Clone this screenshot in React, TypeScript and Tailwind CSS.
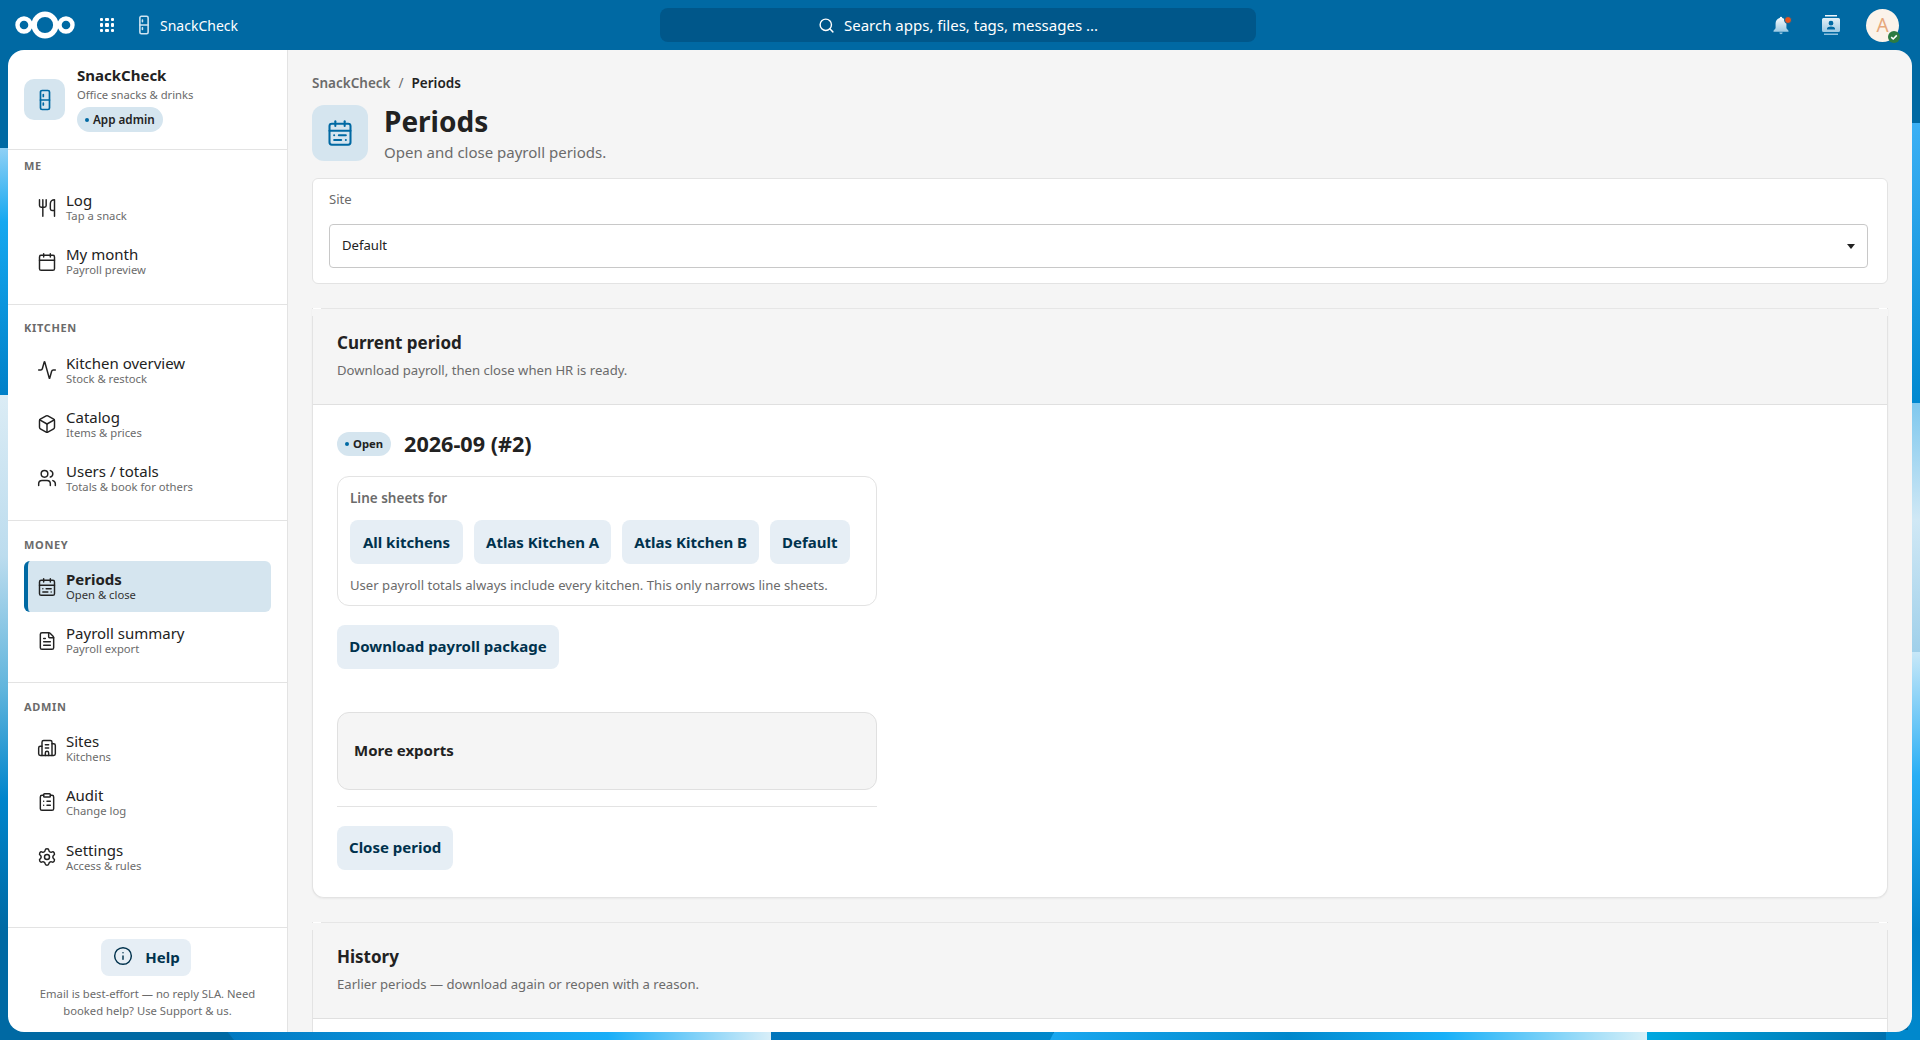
import React from "react";
import {
  Utensils, Calendar, Activity, Box, Users, CalendarRange, FileText, Building2, ClipboardList, Settings, Info, Search,
} from "lucide-react";

function Fridge({ className }: { className?: string }) {
  return (
    <svg viewBox="0 0 24 24" fill="none" stroke="currentColor" strokeWidth="1.7" strokeLinecap="round" className={className}>
      <rect x="7.5" y="2.5" width="9" height="19" rx="1.6" />
      <path d="M7.5 12h9M10.3 6.5v2M10.3 15v2" />
    </svg>
  );
}

function Wallpaper() {
  return (
    <svg viewBox="0 0 1920 1040" preserveAspectRatio="none" className="absolute inset-0 h-full w-full">
      <defs>
        <linearGradient id="l1" x1="0" y1="0" x2="0" y2="1">
          <stop offset="0" stopColor="#8fd0f5" />
          <stop offset="0.3" stopColor="#15a8f0" />
          <stop offset="1" stopColor="#0080c8" />
        </linearGradient>
        <linearGradient id="l2" x1="0" y1="0" x2="0" y2="1">
          <stop offset="0" stopColor="#dbecf5" />
          <stop offset="0.3" stopColor="#bcdcee" />
          <stop offset="0.55" stopColor="#5fb4dc" />
          <stop offset="0.75" stopColor="#0085cc" />
          <stop offset="1" stopColor="#0069a3" />
        </linearGradient>
        <linearGradient id="r1" x1="0" y1="0" x2="0" y2="1">
          <stop offset="0" stopColor="#3cb0f5" />
          <stop offset="1" stopColor="#0088d0" />
        </linearGradient>
        <linearGradient id="r2" x1="0" y1="0" x2="0" y2="1">
          <stop offset="0" stopColor="#7fc8ee" />
          <stop offset="0.47" stopColor="#d0e8f5" />
          <stop offset="1" stopColor="#a0d0ea" />
        </linearGradient>
        <linearGradient id="r3" x1="0" y1="0" x2="0" y2="1">
          <stop offset="0" stopColor="#c8e8f8" />
          <stop offset="0.32" stopColor="#28aef5" />
          <stop offset="0.72" stopColor="#0080c8" />
          <stop offset="1" stopColor="#0088cc" />
        </linearGradient>
        <linearGradient id="b1" x1="0" y1="0" x2="1" y2="0">
          <stop offset="0" stopColor="#0078c0" />
          <stop offset="0.7" stopColor="#18aef8" />
          <stop offset="1" stopColor="#d8eef8" />
        </linearGradient>
        <linearGradient id="b2" x1="0" y1="0" x2="1" y2="0">
          <stop offset="0" stopColor="#1aa8f0" />
          <stop offset="0.4" stopColor="#0088cc" />
          <stop offset="0.66" stopColor="#18b0f8" />
          <stop offset="1" stopColor="#d8f0f8" />
        </linearGradient>
        <linearGradient id="b3" x1="0" y1="0" x2="1" y2="0">
          <stop offset="0" stopColor="#00a8e0" />
          <stop offset="1" stopColor="#0070ae" />
        </linearGradient>
        <linearGradient id="b0" x1="0" y1="0" x2="1" y2="0">
          <stop offset="0" stopColor="#0075bb" />
          <stop offset="1" stopColor="#0088cc" />
        </linearGradient>
      </defs>
      <rect width="1920" height="1040" fill="#0069a3" />
      <rect x="0" y="148" width="12" height="247" fill="url(#l1)" />
      <rect x="0" y="395" width="12" height="538" fill="url(#l2)" />
      <rect x="1908" y="123" width="12" height="280" fill="url(#r1)" />
      <rect x="1908" y="403" width="12" height="249" fill="url(#r2)" />
      <rect x="1908" y="652" width="12" height="388" fill="url(#r3)" />
      <path d="M226 1030 H771 V1040 H234 Z" fill="url(#b1)" />
      <rect x="771" y="1030" width="282" height="10" fill="url(#b0)" />
      <path d="M1055 1030 H1647 V1040 H1050 Z" fill="url(#b2)" />
      <rect x="1647" y="1030" width="239" height="10" fill="url(#b3)" />
      <rect x="1886" y="1030" width="34" height="10" fill="#0088cc" />
    </svg>
  );
}

function Logo() {
  return (
    <svg width="62" height="30" viewBox="0 0 62 30" fill="none" stroke="#fff" className="shrink-0">
      <circle cx="31" cy="15" r="10.8" strokeWidth="5.4" />
      <circle cx="10" cy="15" r="6.5" strokeWidth="4.4" />
      <circle cx="52" cy="15" r="6.5" strokeWidth="4.4" />
    </svg>
  );
}

function AppsIcon() {
  const dots = [0, 1, 2, 3, 4, 5, 6, 7, 8];
  return (
    <div className="grid w-[14px] grid-cols-3 gap-[2px]">
      {dots.map((d) => (
        <span key={d} className="h-[3.4px] w-[3.4px] rounded-[1px] bg-white" />
      ))}
    </div>
  );
}

function BellIcon() {
  return (
    <div className="relative h-[18px] w-[17px]">
      <svg viewBox="0 0 24 24" className="h-[20px] w-[20px] -translate-x-[2px] -translate-y-[1px]">
        <defs>
          <linearGradient id="bellg" x1="0" y1="0" x2="0" y2="1">
            <stop offset="0" stopColor="#ffffff" />
            <stop offset="1" stopColor="#8cc0de" />
          </linearGradient>
        </defs>
        <path d="M12 2a1.6 1.6 0 0 0-1.5 1.5A7 7 0 0 0 5.5 10v6L3 19v1h18v-1l-2.5-3v-6a7 7 0 0 0-5-6.5A1.6 1.6 0 0 0 12 2Zm-2 19a2 2 0 0 0 4 0Z" fill="url(#bellg)" />
      </svg>
      <span className="absolute right-[-2px] top-0 box-content h-[6px] w-[6px] rounded-full border border-[#0069a3] bg-[#e9531c]" />
    </div>
  );
}

function ContactsIcon() {
  return (
    <svg viewBox="0 0 18 20" className="h-[20px] w-[18px]">
      <defs>
        <linearGradient id="cg" x1="0" y1="0" x2="0" y2="1">
          <stop offset="0" stopColor="#ffffff" stopOpacity="0.95" />
          <stop offset="1" stopColor="#8cc0de" />
        </linearGradient>
      </defs>
      <path fillRule="evenodd" d="M3 0h12v1.4H3ZM2 18.6h14V20H2ZM1.5 3h15A1.5 1.5 0 0 1 18 4.5v11a1.5 1.5 0 0 1-1.5 1.5h-15A1.5 1.5 0 0 1 0 15.5v-11A1.5 1.5 0 0 1 1.5 3ZM9 5.8a2.4 2.4 0 1 0 0 4.8 2.4 2.4 0 0 0 0-4.8ZM5 14.4h8v-1c0-1.3-2-2-4-2s-4 .7-4 2Z" fill="url(#cg)" />
    </svg>
  );
}

function TopBar() {
  return (
    <header className="relative flex h-[50px] shrink-0 items-center">
      <div className="flex min-w-0 flex-1 basis-0 items-center pl-[14px] pr-[3px]">
        <Logo />
        <div className="ml-[24px]"><AppsIcon /></div>
        <Fridge className="ml-[19px] h-[22px] w-[22px] text-[#cfe4f1]" />
        <span className="ml-[5px] text-[14px] text-white">SnackCheck</span>
      </div>
      <div className="flex h-[34px] w-[596px] items-center justify-center rounded-lg bg-[#00578a] text-[15px] text-white">
        <Search className="mr-[9px] h-[17px] w-[17px]" strokeWidth={2} />
        <span>Search apps, files, tags, messages ...</span>
      </div>
      <div className="flex min-w-0 flex-1 basis-0 items-center justify-end pr-[21px]">
        <BellIcon />
        <div className="ml-[32px]"><ContactsIcon /></div>
        <div className="relative ml-[26px] flex h-[33px] w-[33px] items-center justify-center rounded-full bg-[#fbf3ea] text-[19px] text-[#e6a77a]">
          A
          <span className="absolute bottom-[-1px] right-[-1px] flex h-[12px] w-[12px] items-center justify-center rounded-full bg-[#2d7b41]">
            <svg viewBox="0 0 12 12" className="h-[12px] w-[12px]" fill="none" stroke="#fff" strokeWidth="1.6">
              <path d="M3.2 6.2 5.2 8 8.8 4.4" />
            </svg>
          </span>
        </div>
      </div>
    </header>
  );
}

type Item = { icon: React.ComponentType<any>; title: string; sub: string; active?: boolean; lift?: boolean };

function NavRow({ icon: Icon, title, sub, active, lift }: Item) {
  return (
    <div
      className={
        active
          ? "flex h-[51px] items-center gap-[9px] rounded-md border-l-4 border-[#0069a3] bg-[#d5e5ef] pl-[9px]"
          : "flex h-[51px] items-center gap-[9px] rounded-md border-l-4 border-transparent pl-[9px]"
      }
    >
      <Icon className="h-[20px] w-[20px] shrink-0 text-[#222222]" strokeWidth={1.75} />
      <div className={lift ? "min-w-0 pb-[2px]" : "min-w-0"}>
        <div className={active ? "text-[15px] font-bold leading-[18px] text-[#222222]" : "text-[15px] leading-[18px] text-[#222222]"}>{title}</div>
        <div className={active ? "text-[11.25px] leading-[14px] text-[#333333]" : "text-[11.25px] leading-[14px] text-[#6b6b6b]"}>{sub}</div>
      </div>
    </div>
  );
}

function NavSection({ label, items, pt, pb }: { label: string; items: Item[]; pt: string; pb: string }) {
  return (
    <section className={`border-b border-[#e3e3e3] px-[16px] ${pt} ${pb}`}>
      <div className="mb-[8px] text-[11px] font-bold uppercase leading-[16px] tracking-[0.06em] text-[#6b6b6b]">{label}</div>
      <div className="flex flex-col gap-[3px]">
        {items.map((i) => (
          <NavRow key={i.title} {...i} />
        ))}
      </div>
    </section>
  );
}

function Sidebar() {
  return (
    <aside className="flex w-[280px] shrink-0 flex-col border-r border-[#e3e3e3] bg-white">
      <div className="flex h-[100px] items-center gap-[12px] border-b border-[#e3e3e3] pl-[16px]">
        <div className="flex h-[41px] w-[41px] items-center justify-center rounded-[10px] bg-[#d5e5ef]">
          <Fridge className="h-[24px] w-[24px] text-[#0069a3]" />
        </div>
        <div>
          <div className="-mt-[2px] text-[15px] font-bold leading-[20px] text-[#222222]">SnackCheck</div>
          <div className="mt-[1px] text-[11.25px] leading-[18px] text-[#6b6b6b]">Office snacks &amp; drinks</div>
          <div className="mt-[3px] inline-flex h-[25px] items-center rounded-full bg-[#d5e5ef] px-[8px] text-[11.7px] font-semibold text-[#222222]">
            <span className="mr-[4px] h-[4px] w-[4px] rounded-full bg-[#0069a3]" />
            App admin
          </div>
        </div>
      </div>
      <NavSection
        label="Me"
        pt="pt-[8px]"
        pb="pb-[17px]"
        items={[
          { icon: Utensils, title: "Log", sub: "Tap a snack", lift: true },
          { icon: Calendar, title: "My month", sub: "Payroll preview", lift: true },
        ]}
      />
      <NavSection
        label="Kitchen"
        pt="pt-[15px]"
        pb="pb-[17px]"
        items={[
          { icon: Activity, title: "Kitchen overview", sub: "Stock & restock" },
          { icon: Box, title: "Catalog", sub: "Items & prices" },
          { icon: Users, title: "Users / totals", sub: "Totals & book for others" },
        ]}
      />
      <NavSection
        label="Money"
        pt="pt-[16px]"
        pb="pb-[16px]"
        items={[
          { icon: CalendarRange, title: "Periods", sub: "Open & close", active: true, lift: true },
          { icon: FileText, title: "Payroll summary", sub: "Payroll export", lift: true },
        ]}
      />
      <section className="flex-1 px-[16px] pt-[16px]">
        <div className="mb-[7px] text-[11px] font-bold uppercase leading-[16px] tracking-[0.06em] text-[#6b6b6b]">Admin</div>
        <div className="flex flex-col gap-[3px]">
          <NavRow icon={Building2} title="Sites" sub="Kitchens" />
          <NavRow icon={ClipboardList} title="Audit" sub="Change log" />
          <div className="mt-[1px]">
            <NavRow icon={Settings} title="Settings" sub="Access & rules" />
          </div>
        </div>
      </section>
      <div className="flex h-[105px] flex-col items-center border-t border-[#e3e3e3] pt-[11px]">
        <div className="mr-[3px] flex h-[37px] w-[90px] items-center justify-center gap-[13px] rounded-lg bg-[#e6eef5] text-[15px] font-bold text-[#00324d]">
          <Info className="-mt-[3px] h-[20px] w-[20px] translate-x-[1px]" strokeWidth={1.75} />
          Help
        </div>
        <p className="mt-[9px] w-[240px] text-center text-[11.25px] leading-[17px] text-[#6b6b6b]">
          Email is best-effort — no reply SLA. Need booked help? Use Support &amp; us.
        </p>
      </div>
    </aside>
  );
}

function ActionButton({ children, className }: { children: React.ReactNode; className?: string }) {
  return (
    <div className={`flex h-[44px] items-center justify-center whitespace-nowrap rounded-lg bg-[#e6eef5] px-[12px] text-[15px] font-bold text-[#00324d] ${className ?? ""}`}>
      {children}
    </div>
  );
}

function CardHead({ title, sub }: { title: string; sub: string }) {
  return (
    <>
      <div className="mx-[8px] h-px bg-[#e6e6e6]" />
      <div className="-mx-px h-[7px] bg-[#f5f5f5]" />
      <div className="h-[89px] border-b border-[#e0e0e0] bg-[#f5f5f5] px-[24px] pt-[14px]">
        <h2 className="text-[17px] font-bold leading-[25px] text-[#222222]">{title}</h2>
        <p className="mt-[6px] text-[13.125px] leading-[18px] text-[#6b6b6b]">{sub}</p>
      </div>
    </>
  );
}

function Main() {
  return (
    <main className="min-w-0 flex-1 overflow-hidden bg-[#f5f5f5] px-[24px] pt-[24px]">
      <div className="flex h-[18px] items-center text-[13.5px] font-semibold leading-[18px] text-[#6b6b6b]">
        SnackCheck<span className="mx-[8px] font-normal">/</span><span className="text-[#222222]">Periods</span>
      </div>
      <div className="mt-[13px] flex h-[56px] items-center gap-[16px]">
        <div className="flex h-[56px] w-[56px] items-center justify-center rounded-xl bg-[#d5e5ef]">
          <CalendarRange className="h-[28px] w-[28px] text-[#0069a3]" strokeWidth={1.75} />
        </div>
        <div>
          <h1 className="-mt-[1px] text-[28px] font-bold leading-[34px] text-[#222222]">Periods</h1>
          <p className="mt-[4px] text-[15px] leading-[20px] text-[#6b6b6b]">Open and close payroll periods.</p>
        </div>
      </div>
      <div className="mt-[17px] h-[106px] rounded-md border border-[#e3e3e3] bg-white pl-[16px] pr-[19px] pt-[11px]">
        <div className="text-[13.125px] leading-[18px] text-[#6b6b6b]">Site</div>
        <div className="mt-[16px] flex h-[44px] items-center justify-between rounded-[4px] border border-[#c8c8c8] bg-white pl-[12px] pr-[12px] text-[13.125px] text-[#222222]">
          Default
          <svg viewBox="0 0 8 5" className="h-[5px] w-[8px]"><path d="M0 0h8L4 5Z" fill="#222222" /></svg>
        </div>
      </div>

      <section className="mt-[24px] h-[590px] rounded-b-xl border-x border-b border-[#e3e3e3] bg-white shadow-[0_1px_2px_rgba(0,0,0,0.05)]">
        <CardHead title="Current period" sub="Download payroll, then close when HR is ready." />
        <div className="px-[24px] pt-[24px]">
          <div className="flex h-[30px] items-center gap-[13px]">
            <div className="inline-flex h-[24px] items-center rounded-full bg-[#d5e5ef] px-[8px] text-[11.25px] font-bold text-[#222222]">
              <span className="mr-[4px] h-[4px] w-[4px] rounded-full bg-[#0069a3]" />
              Open
            </div>
            <h3 className="text-[21.6px] font-bold leading-[30px] text-[#222222]">2026-09 (#2)</h3>
          </div>
          <div className="mt-[17px] h-[130px] w-[540px] rounded-xl border border-[#e3e3e3] px-[12px] pt-[12px]">
            <div className="text-[13.5px] font-semibold leading-[18px] text-[#6b6b6b]">Line sheets for</div>
            <div className="mt-[13px] flex gap-[11px]">
              <ActionButton className="w-[113px]">All kitchens</ActionButton>
              <ActionButton>Atlas Kitchen A</ActionButton>
              <ActionButton>Atlas Kitchen B</ActionButton>
              <ActionButton>Default</ActionButton>
            </div>
            <p className="mt-[12px] text-[13.125px] leading-[18px] text-[#6b6b6b]">
              User payroll totals always include every kitchen. This only narrows line sheets.
            </p>
          </div>
          <ActionButton className="mt-[19px] w-[222px] pb-[2px]">Download payroll package</ActionButton>
          <div className="mt-[43px] flex h-[78px] w-[540px] items-center rounded-xl border border-[#e0e0e0] bg-[#f5f5f5] px-[16px] pb-[2px] text-[15px] font-bold text-[#222222]">
            More exports
          </div>
          <div className="mt-[16px] h-px w-[540px] bg-[#e3e3e3]" />
          <ActionButton className="mt-[19px] w-fit pb-[2px]">Close period</ActionButton>
        </div>
      </section>

      <section className="mt-[24px] h-[300px] rounded-b-xl border-x border-b border-[#e3e3e3] bg-white">
        <CardHead title="History" sub="Earlier periods — download again or reopen with a reason." />
      </section>
    </main>
  );
}

export default function App() {
  return (
    <div className="relative flex h-[1040px] w-[1920px] flex-col overflow-hidden font-['Noto_Sans',sans-serif]">
      <Wallpaper />
      <TopBar />
      <div className="relative mx-[8px] flex h-[982px] overflow-hidden rounded-[16px]">
        <Sidebar />
        <Main />
      </div>
    </div>
  );
}
